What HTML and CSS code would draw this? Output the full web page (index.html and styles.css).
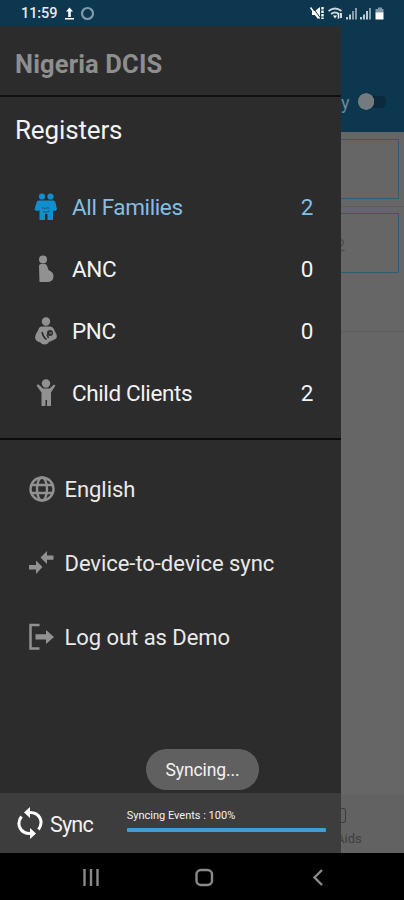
FILE: index.html
```
<!DOCTYPE html>
<html lang="en">
<head>
<meta charset="utf-8">
<title>Nigeria DCIS</title>
<link rel="stylesheet" href="styles.css">
</head>
<body>
<header class="status">
  <span class="clock">11:59</span>
  <svg class="status-left" width="32" height="26" viewBox="0 0 32 26"><path d="M7.500 7.500 11 11.500H8.800V17H6.200V11.500H4zM3 18h9v1.500H3z" fill="#fff"/><circle cx="25.500" cy="13.500" r="5.500" fill="none" stroke="#7c9aaa" stroke-width="2.200"/></svg>
  <svg class="status-right" width="78" height="26" viewBox="0 0 78 26"><path d="M3 11h3l5-4v12l-5-4H3z" fill="#fff"/><path d="M3.500 7 11 17.500" stroke="#0d374f" stroke-width="1"/><path d="M1.500 7.500 9.500 18.500" stroke="#fff" stroke-width="1.500"/><path d="M13.500 7v12" stroke="#fff" stroke-width="2.400" stroke-dasharray="2.500 1"/><g fill="none" stroke="#cad5dc" stroke-width="1.800"><path d="M19.500 11q6.500-5 13 0M22 14q4-3 8 0"/></g><path d="m24 15.500 2 3 2-3z" fill="#fff"/><path d="M29.500 13.500v5M32 13v5" stroke="#fff" stroke-width="1.600"/><g fill="#bdcbd2"><path d="M37 17h2v2.500h-2zM40 14.500h2v5h-2zM51 17h2v2.500h-2zM54 14.500h2v5h-2z"/><path d="M57 11h2v8.500h-2z"/></g><path d="M43 11h2v8.500h-2zM46 8h2v11.500h-2zM60 8h2v11.500h-2z" fill="#849dab"/><path d="M69 7.500h4V9h1.500v4h-8V9H69z" fill="#809aa8"/><path d="M66.500 12.500h8v7h-8z" fill="#fff"/></svg>
</header>
<main class="screen">
  <aside class="drawer">
    <h1 class="brand">Nigeria DCIS</h1>
    <section class="registers">
      <h2 class="heading">Registers</h2>
      <div class="register active"><svg class="reg-icon" width="24" height="28" viewBox="0 0 24 28" fill="currentColor"><circle cx="8" cy="3.500" r="3.100"/><circle cx="16.500" cy="3.500" r="3.100"/><path d="M5 7.500h14q2 0 2.500 2l1.500 7-1.500 1.500-2.500-.5V27h-5.500v-6h-2.500v6H5.500v-9.500l-3 .5L.5 16.500l2-7q.5-2 2.500-2z"/><path d="M8 15.500c1-1 2.500-1 3.500.5 1-1.500 3-1.500 4-.5M9 18.500q3.500 2 6.500-.5" fill="none" stroke="#214c64" stroke-width="1"/></svg><span>All Families</span><b>2</b></div>
      <div class="register"><svg class="reg-icon" width="24" height="28" viewBox="0 0 24 28" fill="currentColor"><circle cx="9" cy="4.500" r="4"/><path d="M5 11q0-2 2-2h4q1.500 0 2.500 3l1 3q5 2 5 6 0 6-6.500 6H5.500z"/></svg><span>ANC</span><b>0</b></div>
      <div class="register"><svg class="reg-icon" width="24" height="28" viewBox="0 0 24 28" fill="currentColor"><circle cx="12" cy="4.500" r="4.200"/><path d="M8 9.500h8q3 0 4.500 4l2 4q1.500 4-3 5.500l-4.500 2q-1.500 2.500-4.500 2.500t-4-2q-5-1-5.500-5 0-3 3-7 1-4 4-4z"/><path d="M8 15q1 5 4.500 7.500M13 17.500l1.500 3.500" fill="none" stroke="#2c2c2c" stroke-width="1.500"/><circle cx="16" cy="16" r="3" fill="#2c2c2c"/><circle cx="16.500" cy="16" r="1.300" fill="#626262"/></svg><span>PNC</span><b>0</b></div>
      <div class="register"><svg class="reg-icon" width="24" height="28" viewBox="0 0 24 28" fill="currentColor"><circle cx="12" cy="4.500" r="4.200"/><path d="m2.500 6.500 1.700-1.200L9 9.500h6.500l4.500-4 1.500 1-4.500 7V27h-4v-6h-1.500v6h-4V13.500z"/></svg><span>Child Clients</span><b>2</b></div>
    </section>
    <nav class="links">
      <div class="link"><svg width="28" height="28" viewBox="0 0 28 28" fill="none" stroke="currentColor" stroke-width="2.400"><circle cx="14" cy="14" r="11.500"/><ellipse cx="14" cy="14" rx="5" ry="11.500"/><path d="M3.500 10h21M3.500 18h21"/></svg><span>English</span></div>
      <div class="link"><svg width="28" height="28" viewBox="0 0 28 28" fill="currentColor"><path d="M1 16h7v-4.500l6.500 6.500L8 25v-4.500H1zM25.500 6.500h-6.500V2l-6.500 6.500L19 15v-4.300h6.500z"/></svg><span>Device-to-device sync</span></div>
      <div class="link"><svg width="28" height="28" viewBox="0 0 28 28" fill="currentColor"><path d="M11.500 2H2.500v23.500h9" fill="none" stroke="currentColor" stroke-width="2.500"/><path d="M7.500 11.200H18V7l8 7-8 7v-4.500H7.500z"/></svg><span>Log out as Demo</span></div>
    </nav>
    <footer class="sync">
      <svg class="sync-icon" width="26" height="32" viewBox="0 0 26 32"><g fill="none" stroke="#fff" stroke-width="3"><path d="M12 5.500C23 5 27 15 21.500 22.500"/><path d="M14 26.500C3 27 -1 17 4.500 9.500"/></g><path d="M13 0v11L7 5.500zM13 21v11l6-5.500z" fill="#fff"/></svg>
      <span class="sync-label">Sync</span>
      <div class="progress"><span>Syncing Events : 100%</span><div class="bar"></div></div>
    </footer>
    <div class="toast">Syncing...</div>
  </aside>
  <div class="behind">
    <div class="toolbar"><span>y</span><i class="switch"></i></div>
    <div class="row"><div class="box"></div></div>
    <div class="row second"><div class="box">2</div></div>
    <div class="row last"></div>
    <div class="tab"><i class="tab-icon"></i><span>Aids</span></div>
  </div>
</main>
<footer class="android">
  <svg width="404" height="47" viewBox="0 0 404 47" fill="none" stroke="#8a8a8a" stroke-width="2.400"><path d="M84.500 16v17M91 16v17M97.500 16v17"/><rect x="196.500" y="17" width="15.500" height="15" rx="4.500"/><path d="m322 17-7.500 7.500 7.500 7.500"/></svg>
</footer>
</body>
</html>
```
FILE: styles.css
```
* { box-sizing: border-box; }
body { margin: 0; width: 404px; height: 900px; overflow: hidden; display: flex; flex-direction: column; background: #000; color: #f2f2f2; font-family: Roboto, sans-serif; }
svg { display: block; flex: none; }
.status { height: 26px; flex: none; display: flex; align-items: center; background: #0d374f; padding: 0 17px 0 21px; }
.clock { font-size: 14.5px; font-weight: 500; letter-spacing: -0.1px; width: 41px; color: #e4ebef; }
.status-right { margin-left: auto; }
.screen { height: 827px; flex: none; display: flex; }
.drawer { width: 341px; flex: none; background: #2c2c2c; display: flex; flex-direction: column; position: relative; }
.brand { margin: 0; height: 71px; padding: 4px 15px 0; border-bottom: 2px solid #111; font-size: 25.5px; line-height: 68px; font-weight: 700; letter-spacing: 0.15px; color: #8e8e8e; }
.registers { height: 343px; border-bottom: 2px solid #0c0c0c; }
.heading { margin: 0; height: 79px; padding-left: 15px; line-height: 66px; font-size: 26px; font-weight: 400; letter-spacing: -0.15px; }
.register { height: 62px; padding: 0 28px 0 34px; display: flex; align-items: center; font-size: 22.5px; letter-spacing: -0.38px; }
.register span { margin-left: 14px; }
.register b { font-weight: 400; margin-left: auto; }
.reg-icon { color: #919191; }
.active { color: #83bfe3; }
.active .reg-icon { color: #118fcd; }
.links { flex: 1; padding-top: 12px; color: #e9e9e9; }
.link { height: 74px; padding-left: 28px; display: flex; align-items: center; font-size: 22px; letter-spacing: -0.05px; }
.link svg { color: #919191; }
.link span { margin-left: 8.5px; padding-top: 1px; }
.sync { height: 60px; flex: none; display: flex; align-items: center; background: #3d3d3d; padding: 0 15px 0 17px; }
.sync-label { font-size: 21.5px; letter-spacing: -0.8px; margin-left: 7px; width: 77px; padding-top: 2px; }
.progress { width: 200px; font-size: 11px; line-height: 14px; padding-bottom: 5px; }
.bar { height: 4px; margin-top: 5px; border-radius: 1px; background: #429ed0; }
.toast { position: absolute; left: 146px; top: 723px; width: 113px; height: 41px; border-radius: 21px; background: #606060; text-align: center; line-height: 43px; font-size: 17.5px; letter-spacing: -0.1px; }
.behind { flex: 1; overflow: hidden; background: #666; display: flex; flex-direction: column; color: #424e56; }
.toolbar { height: 106px; flex: none; background: #0d374f; padding: 63px 18px 0 0; display: flex; justify-content: space-between; color: #6f8997; font-size: 18px; line-height: 28px; }
.switch { width: 28px; height: 17px; margin-top: 4px; background: radial-gradient(circle at 8px 8.5px, #747b7e 8px, transparent 8.5px), linear-gradient(#0b2a3d, #0b2a3d) 10px 3px / 18px 12px no-repeat; border-radius: 8px; }
.row { height: 75px; flex: none; padding: 7px 5px 8px 0; border-bottom: 1px solid #5b5b5b; }
.box { height: 60px; border: 1px solid #2d5d75; border-left: 0; line-height: 64px; font-size: 16px; text-indent: -5px; }
.second { padding-top: 6px; border: 0; }
.last { height: 50px; }
.tab { margin-top: auto; height: 58px; display: flex; flex-direction: column; padding-top: 13px; background: #626262; color: #3e3e3e; font-size: 13px; line-height: 17px; }
.tab span { margin-left: -5px; padding-top: 1px; }
.tab-icon { width: 5px; height: 15px; margin-bottom: 6px; border: 1.5px solid #3e3e3e; border-left: 0; border-radius: 0 3px 3px 0; }
.android { height: 47px; flex: none; background: #000; }
```
